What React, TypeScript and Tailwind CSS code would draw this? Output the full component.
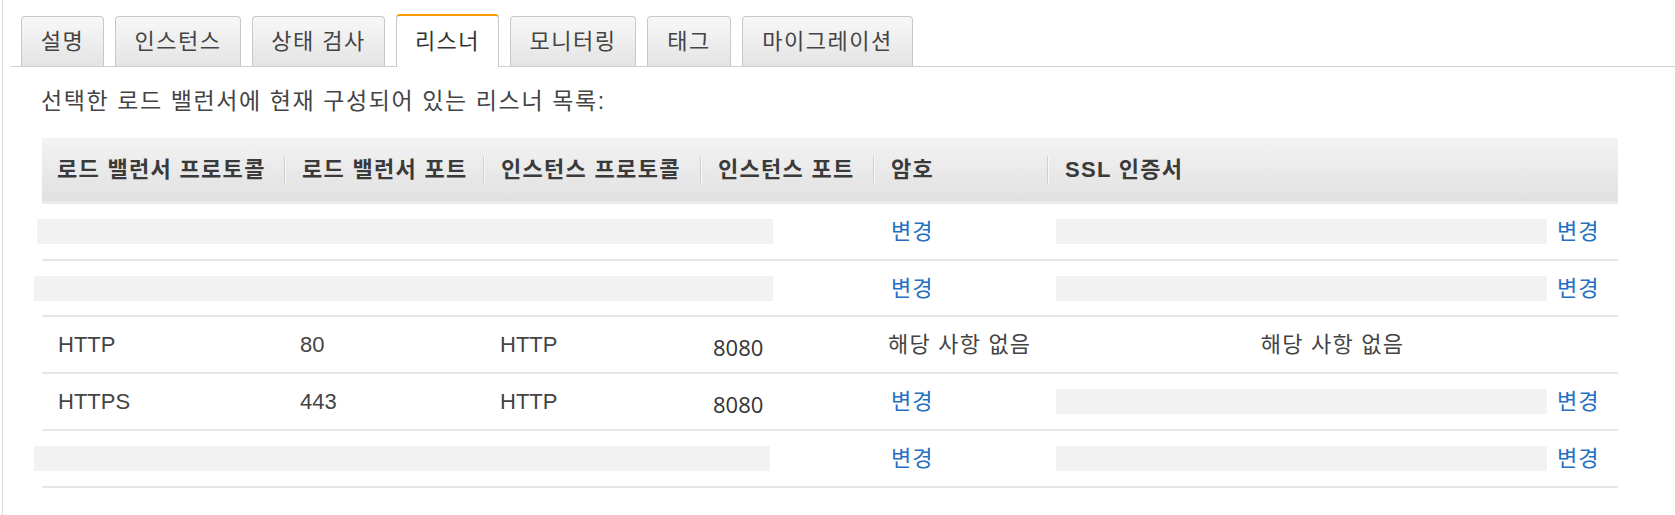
import React from 'react';

type Tab = { label: string; width: string; active?: boolean };

const tabs: Tab[] = [
  { label: '설명', width: 'w-[83px]' },
  { label: '인스턴스', width: 'w-[126px]' },
  { label: '상태 검사', width: 'w-[133px]' },
  { label: '리스너', width: 'w-[103px]', active: true },
  { label: '모니터링', width: 'w-[126px]' },
  { label: '태그', width: 'w-[84px]' },
  { label: '마이그레이션', width: 'w-[171px]' },
];

const gridCols = 'grid grid-cols-[242px_199px_217px_173px_174px_1fr]';

const Redacted = ({ className }: { className: string }) => (
  <div className={`h-[25px] bg-[#f2f2f2] ${className}`} />
);

const ChangeLink = ({ className = '' }: { className?: string }) => (
  <a href="#" className={`text-[22px] tracking-[1px] text-[#2470c2] ${className}`}>
    변경
  </a>
);

const HeaderCell = ({ label, first }: { label: string; first?: boolean }) => (
  <div className="flex h-full items-center">
    {!first && <span className="h-[28px] w-px bg-[#d0d0d0] shadow-[1px_0_0_#f8f8f8]" />}
    <span className={first ? 'pl-[15px]' : 'pl-[17px]'}>{label}</span>
  </div>
);

const SslCell = () => (
  <div className="flex items-center">
    <Redacted className="ml-[9px] w-[491px]" />
    <ChangeLink className="ml-[10px]" />
  </div>
);

const RedactedRow = ({ barClass, height }: { barClass: string; height: string }) => (
  <div className={`${gridCols} ${height} items-center border-b-2 border-[#e6e6e6]`}>
    <div className="col-span-4">
      <Redacted className={barClass} />
    </div>
    <div className="pl-[18px]">
      <ChangeLink />
    </div>
    <SslCell />
  </div>
);

export default function App() {
  return (
    <div
      className="min-h-[515px] bg-white text-[#444]"
      style={{ fontFamily: '"Liberation Sans", "Noto Sans CJK KR", sans-serif' }}
    >
      <div className="ml-[2px] min-h-[515px] border-l border-[#dcdcdc] pt-[14px]">
        {/* tabs */}
        <div className="ml-[8px] flex items-end gap-[11px] border-b border-[#cfcfcf] pl-[10px]">
          {tabs.map((tab) =>
            tab.active ? (
              <div
                key={tab.label}
                className={`${tab.width} -mb-px flex h-[53px] items-center justify-center rounded-t-[4px] border border-b-0 border-t-2 border-[#c8c8c8] border-t-[#f90] bg-white text-[22px] tracking-[1.5px] text-[#333]`}
              >
                {tab.label}
              </div>
            ) : (
              <div
                key={tab.label}
                className={`${tab.width} flex h-[50px] items-center justify-center rounded-t-[4px] border border-b-0 border-[#c8c8c8] bg-linear-to-b from-[#f8f8f8] to-[#e4e4e4] text-[22px] tracking-[1.5px]`}
              >
                {tab.label}
              </div>
            )
          )}
        </div>

        <p className="ml-[38px] mt-[19px] text-[23px] leading-[31px] tracking-[1.6px]">
          선택한 로드 밸런서에 현재 구성되어 있는 리스너 목록:
        </p>

        {/* table */}
        <div className="ml-[39px] mt-[21px] w-[1576px]">
          <div
            className={`${gridCols} h-[66px] border-b-[3px] border-[#ebebeb] bg-linear-to-b from-[#f3f3f3] to-[#e1e1e1] text-[22px] font-bold tracking-[1.3px] text-[#3a3a3a]`}
          >
            <HeaderCell label="로드 밸런서 프로토콜" first />
            <HeaderCell label="로드 밸런서 포트" />
            <HeaderCell label="인스턴스 프로토콜" />
            <HeaderCell label="인스턴스 포트" />
            <HeaderCell label="암호" />
            <HeaderCell label="SSL 인증서" />
          </div>

          <RedactedRow barClass="-ml-[5px] w-[736px]" height="h-[57px]" />
          <RedactedRow barClass="-ml-[8px] w-[739px]" height="h-[56px]" />

          <div className={`${gridCols} h-[57px] items-center border-b-2 border-[#e6e6e6] text-[22px]`}>
            <div className="pl-[16px]">HTTP</div>
            <div className="pl-[16px]">80</div>
            <div className="pl-[17px]">HTTP</div>
            <div className="translate-y-[3px] pl-[13px] text-[#333]" style={{ fontFamily: '"Open Sans", sans-serif' }}>
              8080
            </div>
            <div className="pl-[15px] tracking-[1.2px]">해당 사항 없음</div>
            <div className="text-center tracking-[1.2px]">해당 사항 없음</div>
          </div>

          <div className={`${gridCols} h-[57px] items-center border-b-2 border-[#e6e6e6] text-[22px]`}>
            <div className="pl-[16px]">HTTPS</div>
            <div className="pl-[16px]">443</div>
            <div className="pl-[17px]">HTTP</div>
            <div className="translate-y-[3px] pl-[13px] text-[#333]" style={{ fontFamily: '"Open Sans", sans-serif' }}>
              8080
            </div>
            <div className="pl-[18px]">
              <ChangeLink />
            </div>
            <SslCell />
          </div>

          <RedactedRow barClass="-ml-[8px] w-[736px]" height="h-[57px]" />
        </div>
      </div>
    </div>
  );
}
